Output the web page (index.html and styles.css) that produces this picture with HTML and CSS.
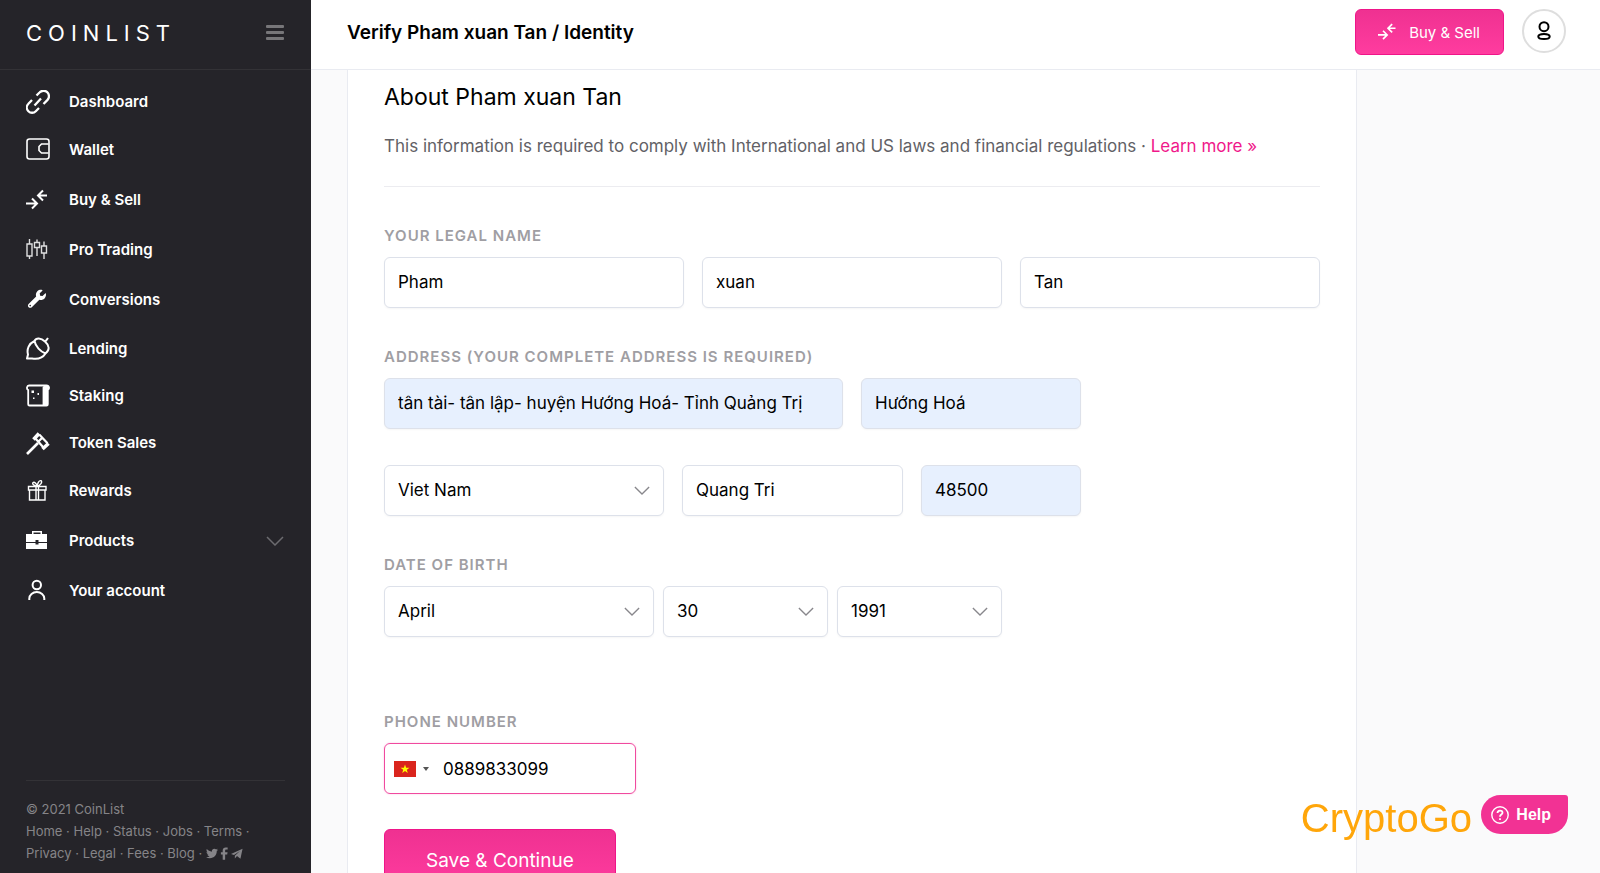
FILE: index.html
```html
<!DOCTYPE html>
<html lang="en">
<head>
<meta charset="utf-8">
<meta name="viewport" content="width=device-width, initial-scale=1">
<title>CoinList – Verify Identity</title>
<link rel="stylesheet" href="styles.css">
</head>
<body>
<svg class="defs" aria-hidden="true">
  <symbol id="swap" viewBox="0 0 24 22"><path d="M21 6.5H11.500M17 1.500 12 6.500l5 5M0 14.500H11M6 9.500l5 5-5 5" fill="none" stroke="currentColor" stroke-width="2"/></symbol>
  <symbol id="chevron" viewBox="0 0 18 10"><path d="m1 1 8 8 8-8" fill="none" stroke="currentColor" stroke-width="1.5"/></symbol>
</svg>
<div class="app">
  <aside class="sidebar">
    <div class="brand">
      <a class="logo" href="#">COINLIST</a>
      <button class="burger" type="button" aria-label="Toggle menu"><span></span><span></span><span></span></button>
    </div>
    <nav class="nav" aria-label="Main">
      <a class="nav-item compact" href="#">
        <svg class="icon" viewBox="0 0 24 24" fill="none" stroke="currentColor" stroke-width="2.3"><path d="m10.5 5.5 3-3a5.200 5.200 0 0 1 8 7.400L17.500 14M13 18l-3.200 3.200a5.200 5.200 0 0 1-7.400-7.400L6 10M8.500 15.500l6.500-7"/></svg>Dashboard</a>
      <a class="nav-item" href="#">
        <svg class="icon" viewBox="0 0 24 24" fill="none" stroke="currentColor" stroke-width="1.6"><rect x="1" y="1" width="22" height="20" rx="2.5"/><path d="M22.500 6H15.500L13 8.500v4l2.500 2.500h7"/></svg>Wallet</a>
      <a class="nav-item roomy" href="#">
        <svg class="icon" viewBox="0 0 24 22"><use href="#swap"/></svg>Buy &amp; Sell</a>
      <a class="nav-item" href="#">
        <svg class="icon" viewBox="0 0 24 24" fill="none" stroke="currentColor" stroke-width="1.4" opacity=".85"><path d="M1 6h5v12H1zM3.500 1v5M3.500 18v3M8.500 4.500h5v5h-5zM11 1.500v3M11 9.500V18M15.500 8h5v7h-5zM18 3.500V8M18 15v6"/></svg>Pro Trading</a>
      <a class="nav-item roomy" href="#">
        <svg class="icon" viewBox="-55 -20 680 620"><path fill="currentColor" d="M507.730 109.100c-2.240-9.030-13.540-12.090-20.120-5.510l-74.360 74.360-67.880-11.310-11.310-67.880 74.360-74.360c6.620-6.620 3.430-17.900-5.660-20.160-47.380-11.740-99.550.910-136.580 37.930-39.640 39.640-50.550 97.100-34.050 147.200L18.740 402.760c-24.990 24.990-24.990 65.510 0 90.500 24.990 24.990 65.510 24.990 90.500 0l213.210-213.210c50.120 16.710 107.470 5.680 147.370-34.220 37.070-37.070 49.700-89.320 37.910-136.730zM64 472c-13.250 0-24-10.750-24-24 0-13.260 10.750-24 24-24s24 10.740 24 24c0 13.250-10.750 24-24 24z"/></svg>Conversions</a>
      <a class="nav-item compact" href="#">
        <svg class="icon" viewBox="0 0 24 24" fill="none" stroke="currentColor" stroke-width="2" stroke-linejoin="round"><path d="M8.500 4C10 .5 15 .5 19 4.500c4.500 4 5 8.500.5 12C14.500 14.500 9.500 9.500 8.500 4zM8.500 4C3 6.500.5 12 2 17.500l-1 4h5c6 1 11-1 13.500-5M19.300 4.700 22 1"/></svg>Lending</a>
      <a class="nav-item compact" href="#">
        <svg class="icon" viewBox="0 0 24 24" fill="none" stroke="currentColor" stroke-width="1.8"><path d="M3 1.500h17.500c3 0 3 3.500 1.300 4.500v14.200c0 .8-.5 1.300-1.300 1.300h-17c-.8 0-1.300-.5-1.300-1.300V6C.2 5 .8 1.500 3 1.500z"/><path d="M17.500 3.500C18 2 22.500 1.800 22.500 4L21 6v14.500h-3.500z" fill="currentColor"/><path d="M5.500 6.500h2.500v2.500H5.500zM11.500 9h1.500v2h-1.500zM7 13.500h1.500V15H7z" fill="currentColor" stroke="none"/></svg>Staking</a>
      <a class="nav-item compact" href="#">
        <svg class="icon" viewBox="0 0 24 24" fill="none" stroke="currentColor"><path stroke-width="2.600" d="M1 23 12 12"/><path stroke-width="3.600" d="m7.500 8.500 5.500-6M16.500 18l6-5.500"/><path stroke-width="2.200" d="m9.500 7.500 7.500 8.500M13.500 3.700l8 8.500M12.500 10.500l3.500-3.500"/></svg>Token Sales</a>
      <a class="nav-item" href="#">
        <svg class="icon" viewBox="0 0 24 24" fill="none" stroke="currentColor" stroke-width="1.4"><path d="M2.500 7.500h17.500v3.500H2.500zM3.500 11h15.500v10H3.500zM10 7.500V21M12.500 7.500V21M11.200 7.200C8 6.800 5.800 5 7 3.600c1.500-1 3.500 1 4.200 3.600.3-3 1.800-6 3.800-5.500 1.800 1.200-.5 4.500-3.800 5.500z"/></svg>Rewards</a>
      <a class="nav-item roomy" href="#">
        <svg class="icon" viewBox="0 0 24 24" fill="currentColor"><path d="M6 5V2h10v3h5v8h-8.500v-2h-3v2H0V5zM7.500 5h7V3.500h-7zM0 14h9.500v1.500h3V14H21v6H0z"/></svg>Products
        <svg class="nav-chevron" viewBox="0 0 18 10"><use href="#chevron"/></svg></a>
      <a class="nav-item" href="#">
        <svg class="icon" viewBox="0 0 24 24" fill="none" stroke="currentColor" stroke-width="2"><circle cx="10.800" cy="6" r="4.200"/><path d="M3.300 21v-1.500a7.500 6.500 0 0 1 15 0V21"/></svg>Your account</a>
    </nav>
    <footer class="side-footer">
      <div>© 2021 CoinList</div>
      <div><a href="#">Home</a> · <a href="#">Help</a> · <a href="#">Status</a> · <a href="#">Jobs</a> · <a href="#">Terms</a> ·</div>
      <div><a href="#">Privacy</a> · <a href="#">Legal</a> · <a href="#">Fees</a> · <a href="#">Blog</a> ·
        <a href="#" aria-label="Twitter"><svg class="social" viewBox="0 0 512 512"><path d="M459.400 151.700c.3 4.500.3 9.100.3 13.600 0 138.700-105.600 298.600-298.600 298.600-59.500 0-114.700-17.200-161.100-47.100 8.400 1 16.600 1.300 25.300 1.300 49.100 0 94.200-16.600 130.300-44.800-46.100-1-84.800-31.200-98.100-72.800 6.500 1 13 1.600 19.800 1.600 9.400 0 18.800-1.300 27.600-3.600-48.100-9.700-84.100-52-84.100-103v-1.300c14 7.800 30.200 12.700 47.400 13.300-28.300-18.800-46.800-51-46.800-87.400 0-19.500 5.200-37.400 14.300-53 51.700 63.700 129.300 105.300 216.400 109.800-1.600-7.800-2.600-15.900-2.600-24 0-57.800 46.800-104.900 104.900-104.900 30.200 0 57.500 12.700 76.700 33.100 23.700-4.500 46.500-13.300 66.600-25.300-7.800 24.400-24.400 44.800-46.100 57.800 21.100-2.300 41.600-8.100 60.400-16.200-14.300 20.800-32.200 39.300-52.600 54.300z"/></svg></a><a href="#" aria-label="Facebook"><svg class="social narrow" viewBox="0 0 10 14"><path d="M3 14V8H1V5.500h2v-2C3 1.200 4.300.2 6.300.2L8.500.3v2.200H7c-1 0-1.300.5-1.300 1.300v1.700h2.700L8 8H5.700v6z"/></svg></a><a href="#" aria-label="Telegram"><svg class="social" viewBox="0 0 14 14"><path d="M0 7.500 13.500 1.500 11 13 7 10l-2.500 2.800V9.500L10.500 4 3.500 8.800z"/></svg></a></div>
    </footer>
  </aside>

  <div class="page">
    <header class="topbar">
      <h1 class="title">Verify Pham xuan Tan / Identity</h1>
      <div class="actions">
        <button class="btn btn-trade" type="button"><svg class="btn-icon" viewBox="0 0 24 22"><use href="#swap"/></svg>Buy &amp; Sell</button>
        <button class="avatar" type="button" aria-label="Account"><svg viewBox="0 0 16 20" fill="none" stroke="currentColor" stroke-width="2"><circle cx="8" cy="5.700" r="4.500"/><ellipse cx="8" cy="15.500" rx="5.700" ry="2.600"/></svg></button>
      </div>
    </header>

    <main class="content">
      <form class="card">
        <h2 class="heading">About Pham xuan Tan</h2>
        <p class="lead">This information is required to comply with International and US laws and financial regulations · <a href="#">Learn more »</a></p>

        <fieldset class="group">
          <legend class="label">Your legal name</legend>
          <div class="row row-name">
            <input class="field" type="text" aria-label="First name" value="Pham">
            <input class="field" type="text" aria-label="Middle name" value="xuan">
            <input class="field" type="text" aria-label="Last name" value="Tan">
          </div>
        </fieldset>

        <fieldset class="group">
          <legend class="label">Address (your complete address is required)</legend>
          <div class="row row-street">
            <input class="field filled" type="text" aria-label="Street address" value="tân tài- tân lập- huyện Hướng Hoá- Tỉnh Quảng Trị">
            <input class="field filled" type="text" aria-label="City" value="Hướng Hoá">
          </div>
          <div class="row row-region">
            <div class="select"><select class="field" aria-label="Country"><option>Viet Nam</option></select><svg viewBox="0 0 18 10"><use href="#chevron"/></svg></div>
            <input class="field" type="text" aria-label="Province" value="Quang Tri">
            <input class="field filled" type="text" aria-label="Postal code" value="48500">
          </div>
        </fieldset>

        <fieldset class="group">
          <legend class="label">Date of birth</legend>
          <div class="row row-date">
            <div class="select"><select class="field" aria-label="Month"><option>April</option></select><svg viewBox="0 0 18 10"><use href="#chevron"/></svg></div>
            <div class="select"><select class="field" aria-label="Day"><option>30</option></select><svg viewBox="0 0 18 10"><use href="#chevron"/></svg></div>
            <div class="select"><select class="field" aria-label="Year"><option>1991</option></select><svg viewBox="0 0 18 10"><use href="#chevron"/></svg></div>
          </div>
        </fieldset>

        <div class="group group-phone">
          <label class="label" for="phone">Phone number</label>
          <div class="phone">
            <button class="dial" type="button" aria-label="Country code: Viet Nam"><svg class="flag" viewBox="0 0 22 16"><path fill="#da251d" d="M0 0h22v16H0z"/><path fill="#ff0" d="m11 3.500 1.100 3.200h3.400l-2.700 2 1 3.300-2.800-2-2.800 2 1-3.300-2.700-2h3.400z"/></svg><span class="caret"></span></button>
            <input class="phone-input" id="phone" type="tel" value="0889833099">
          </div>
        </div>

        <button class="btn btn-save" type="submit">Save &amp; Continue</button>
      </form>
    </main>
  </div>
</div>
<div class="watermark">CryptoGo</div>
<button class="help" type="button"><svg viewBox="0 0 18 18" fill="none" stroke="currentColor" stroke-width="1.4"><circle cx="9" cy="9" r="8.200"/><path stroke-width="1.8" d="M6.500 7c0-3.200 5-3.200 5-.3 0 2-2.500 1.800-2.500 4M9 12.200v1.700"/></svg>Help</button>
</body>
</html>
```
FILE: styles.css
```css
* { box-sizing: border-box; }

:root {
  --pink: #f23294;
  --dark: #252429;
  --line: #dde1ea;
}

body {
  margin: 0;
  font-family: Inter, "Liberation Sans", sans-serif;
  font-size: 17px;
  color: #000;
}

a { color: inherit; text-decoration: none; }
button, input, select { font: inherit; color: inherit; }
button { cursor: pointer; }
.defs { display: none; }

.app {
  display: grid;
  grid-template-columns: 311px 1fr;
  height: 100vh;
  overflow: hidden;
}

/* Sidebar */
.sidebar {
  display: flex;
  flex-direction: column;
  background: var(--dark);
  color: #fff;
}
.brand {
  display: flex;
  justify-content: space-between;
  align-items: center;
  height: 70px;
  padding: 0 27px 4px 26px;
  border-bottom: 1px solid #333236;
}
.logo {
  font-size: 22px;
  font-weight: 400;
  letter-spacing: 6px;
}
.burger {
  display: grid;
  gap: 3px;
  padding: 0;
  border: 0;
  background: none;
}
.burger span {
  width: 18px;
  height: 3px;
  border-radius: 1px;
  background: #777679;
}
.nav {
  display: flex;
  flex-direction: column;
  padding-top: 8px;
}
.nav-item {
  display: flex;
  align-items: center;
  gap: 19px;
  height: 49px;
  padding: 0 27px 0 26px;
  font-size: 15px;
  font-weight: 600;
}
.nav-item.compact { height: 47px; }
.nav-item.roomy { height: 51px; }
.icon { width: 24px; height: 24px; flex: none; }
.nav-chevron {
  width: 18px;
  height: 10px;
  margin-left: auto;
  color: #6c6b6f;
}
.side-footer {
  margin: auto 26px 0;
  padding: 17px 0 9px;
  border-top: 1px solid #333236;
  font-size: 13px;
  line-height: 22px;
  color: #858488;
}
.social {
  width: 12px;
  height: 13px;
  margin-right: 2px;
  vertical-align: -2px;
  fill: currentColor;
}
.social.narrow { width: 9px; }

/* Top bar */
.page {
  display: flex;
  flex-direction: column;
  min-width: 0;
  min-height: 0;
  background: #fafafb;
}
.topbar {
  display: flex;
  flex: none;
  justify-content: space-between;
  height: 70px;
  padding: 9px 34px 0 36px;
  border-bottom: 1px solid #e9ebf1;
  background: #fff;
}
.title {
  margin: 0;
  font-size: 19px;
  font-weight: 600;
  line-height: 48px;
}
.actions { display: flex; gap: 18px; }
.btn {
  border: 1px solid #ef1589;
  border-radius: 6px;
  background: linear-gradient(#ef3191, #ff3c9f);
  color: #fff;
}
.btn-trade {
  display: flex;
  align-items: center;
  gap: 11px;
  height: 46px;
  padding: 0 23px 0 22px;
  font-size: 15px;
}
.btn-icon { width: 20px; height: 20px; }
.avatar {
  display: grid;
  place-items: center;
  width: 44px;
  height: 44px;
  padding: 0;
  border: 2px solid #dedede;
  border-radius: 50%;
  background: #fff;
}
.avatar svg { width: 16px; height: 20px; }

/* Form card */
.content {
  flex: 1;
  min-height: 0;
  padding: 0 36px;
  overflow: hidden;
}
.card {
  max-width: 1010px;
  padding: 10px 36px 36px;
  border: 1px solid #e9ebf1;
  border-width: 0 1px;
  background: #fff;
}
.heading {
  margin: 0;
  font-size: 23px;
  font-weight: 400;
  line-height: 34px;
}
.lead {
  margin: 0 0 39px;
  padding: 20px 0 27px;
  border-bottom: 1px solid #ececf0;
  line-height: 25px;
  color: #626166;
}
.lead a { color: #f0188a; }
.group {
  min-width: 0;
  margin: 0 0 39px;
  padding: 0;
  border: 0;
}
.label {
  display: block;
  margin-bottom: 11px;
  padding: 0;
  font-size: 15px;
  font-weight: 600;
  line-height: 20px;
  letter-spacing: 1px;
  text-transform: uppercase;
  color: #9f9ea3;
}
.row { display: grid; gap: 18px; }
.row-name { grid-template-columns: repeat(3, 1fr); }
.row-street { grid-template-columns: 459fr 220fr; max-width: 697px; }
.row-region {
  grid-template-columns: 280fr 221fr 160fr;
  max-width: 697px;
  margin-top: 36px;
}
.row-date {
  grid-template-columns: 270fr 165fr 165fr;
  gap: 9px;
  max-width: 618px;
}
.field {
  width: 100%;
  min-width: 0;
  height: 51px;
  padding: 0 13px 1px;
  border: 1px solid var(--line);
  border-radius: 6px;
  background: #fff;
  box-shadow: 0 1px 2px #0000000a;
  appearance: none;
}
.field.filled { background: #e7f0fe; }
.select { display: grid; align-items: center; }
.select > * { grid-area: 1 / 1; }
.select svg {
  justify-self: end;
  width: 16px;
  height: 9px;
  margin-right: 14px;
  color: #88878c;
  pointer-events: none;
}
.group-phone { margin: 75px 0 35px; }
.phone {
  display: flex;
  align-items: center;
  max-width: 252px;
  height: 51px;
  border: 1px solid #f04a9f;
  border-radius: 6px;
  box-shadow: 0 0 2px #f04a9f55;
}
.dial {
  display: flex;
  align-items: center;
  gap: 7px;
  padding: 0 0 0 9px;
  border: 0;
  background: none;
}
.flag { width: 22px; height: 16px; }
.caret {
  border: 3px solid transparent;
  border-top: 4px solid #555;
  border-bottom: 0;
}
.phone-input {
  flex: 1;
  min-width: 0;
  height: 100%;
  padding: 0 14px;
  border: 0;
  background: none;
  outline: 0;
}
.btn-save {
  height: 62px;
  padding: 0 41px;
  font-size: 19px;
}

/* Floating items */
.watermark {
  position: fixed;
  right: 128px;
  bottom: 32px;
  font: 40px/46px "Liberation Sans", sans-serif;
  color: #ffa60a;
}
.help {
  position: fixed;
  right: 32px;
  bottom: 39px;
  display: flex;
  align-items: center;
  gap: 7px;
  height: 39px;
  padding: 0 17px 0 10px;
  border: 0;
  border-radius: 20px 3px 20px 20px;
  background: var(--pink);
  color: #fff;
  font-family: "Liberation Sans", sans-serif;
  font-size: 16px;
  font-weight: 700;
}
.help svg { width: 18px; height: 18px; }
```
